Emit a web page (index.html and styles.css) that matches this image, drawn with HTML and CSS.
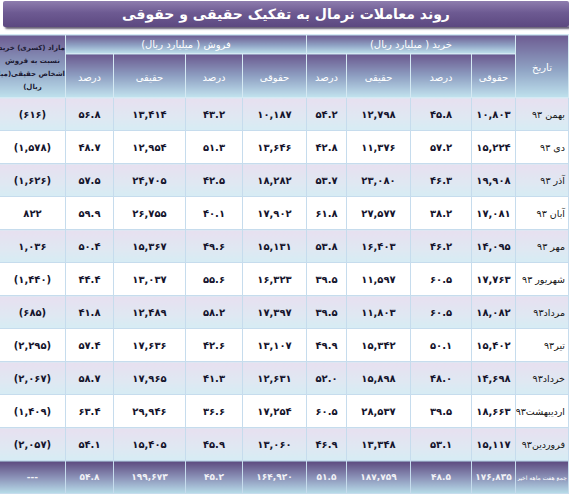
FILE: index.html
```html
<!DOCTYPE html>
<html lang="fa" dir="rtl">
<head>
<meta charset="utf-8">
<title>روند معاملات نرمال</title>
<link rel="stylesheet" href="styles.css">
</head>
<body>
<div class="page">
  <div class="title">روند معاملات نرمال به تفکیک حقیقی و حقوقی</div>
  <table class="grid">
    <colgroup>
      <col class="c-date"><col class="c-b1"><col class="c-b2"><col class="c-b3"><col class="c-b4">
      <col class="c-s1"><col class="c-s2"><col class="c-s3"><col class="c-s4"><col class="c-net">
    </colgroup>
    <thead>
      <tr class="h-group">
        <th rowspan="2" class="h-date">تاریخ</th>
        <th colspan="4">خرید ( میلیارد ریال)</th>
        <th colspan="4">فروش ( میلیارد ریال)</th>
        <th rowspan="2" class="h-net"><div class="clip">مازاد (کسری) خرید<br>نسبت به فروش<br>اشخاص حقیقی(میلیارد<br>ریال)</div></th>
      </tr>
      <tr class="h-sub">
        <th>حقوقی</th><th>درصد</th><th>حقیقی</th><th>درصد</th>
        <th>حقوقی</th><th>درصد</th><th>حقیقی</th><th>درصد</th>
      </tr>
    </thead>
    <tbody>
      <tr class="alt"><td class="date">بهمن ۹۳</td><td>۱۰,۸۰۳</td><td>۴۵.۸</td><td>۱۲,۷۹۸</td><td>۵۴.۲</td><td>۱۰,۱۸۷</td><td>۴۳.۲</td><td>۱۳,۴۱۴</td><td>۵۶.۸</td><td>(۶۱۶)</td></tr>
      <tr><td class="date">دی ۹۳</td><td>۱۵,۲۲۴</td><td>۵۷.۲</td><td>۱۱,۳۷۶</td><td>۴۲.۸</td><td>۱۳,۶۴۶</td><td>۵۱.۳</td><td>۱۲,۹۵۴</td><td>۴۸.۷</td><td>(۱,۵۷۸)</td></tr>
      <tr class="alt"><td class="date">آذر ۹۳</td><td>۱۹,۹۰۸</td><td>۴۶.۳</td><td>۲۳,۰۸۰</td><td>۵۳.۷</td><td>۱۸,۲۸۲</td><td>۴۲.۵</td><td>۲۴,۷۰۵</td><td>۵۷.۵</td><td>(۱,۶۲۶)</td></tr>
      <tr><td class="date">آبان ۹۳</td><td>۱۷,۰۸۱</td><td>۳۸.۲</td><td>۲۷,۵۷۷</td><td>۶۱.۸</td><td>۱۷,۹۰۲</td><td>۴۰.۱</td><td>۲۶,۷۵۵</td><td>۵۹.۹</td><td>۸۲۲</td></tr>
      <tr class="alt"><td class="date">مهر ۹۳</td><td>۱۴,۰۹۵</td><td>۴۶.۲</td><td>۱۶,۴۰۳</td><td>۵۳.۸</td><td>۱۵,۱۳۱</td><td>۴۹.۶</td><td>۱۵,۳۶۷</td><td>۵۰.۴</td><td>۱,۰۳۶</td></tr>
      <tr><td class="date">شهریور ۹۳</td><td>۱۷,۷۶۳</td><td>۶۰.۵</td><td>۱۱,۵۹۷</td><td>۳۹.۵</td><td>۱۶,۳۲۳</td><td>۵۵.۶</td><td>۱۳,۰۳۷</td><td>۴۴.۴</td><td>(۱,۴۴۰)</td></tr>
      <tr class="alt"><td class="date">مرداد۹۳</td><td>۱۸,۰۸۲</td><td>۶۰.۵</td><td>۱۱,۸۰۳</td><td>۳۹.۵</td><td>۱۷,۳۹۷</td><td>۵۸.۲</td><td>۱۲,۴۸۹</td><td>۴۱.۸</td><td>(۶۸۵)</td></tr>
      <tr><td class="date">تیر۹۳</td><td>۱۵,۴۰۲</td><td>۵۰.۱</td><td>۱۵,۳۴۲</td><td>۴۹.۹</td><td>۱۳,۱۰۷</td><td>۴۲.۶</td><td>۱۷,۶۳۶</td><td>۵۷.۴</td><td>(۲,۲۹۵)</td></tr>
      <tr class="alt"><td class="date">خرداد۹۳</td><td>۱۴,۶۹۸</td><td>۴۸.۰</td><td>۱۵,۸۹۸</td><td>۵۲.۰</td><td>۱۲,۶۳۱</td><td>۴۱.۳</td><td>۱۷,۹۶۵</td><td>۵۸.۷</td><td>(۲,۰۶۷)</td></tr>
      <tr><td class="date">اردیبهشت۹۳</td><td>۱۸,۶۶۳</td><td>۳۹.۵</td><td>۲۸,۵۳۷</td><td>۶۰.۵</td><td>۱۷,۲۵۴</td><td>۳۶.۶</td><td>۲۹,۹۴۶</td><td>۶۳.۴</td><td>(۱,۴۰۹)</td></tr>
      <tr class="alt"><td class="date">فروردین۹۳</td><td>۱۵,۱۱۷</td><td>۵۳.۱</td><td>۱۳,۳۴۸</td><td>۴۶.۹</td><td>۱۳,۰۶۰</td><td>۴۵.۹</td><td>۱۵,۴۰۵</td><td>۵۴.۱</td><td>(۲,۰۵۷)</td></tr>
    </tbody>
    <tfoot>
      <tr class="total"><td class="date small"><div class="label">جمع هفت ماهه اخیر</div></td><td>۱۷۶,۸۳۵</td><td>۴۸.۵</td><td>۱۸۷,۷۵۹</td><td>۵۱.۵</td><td>۱۶۴,۹۲۰</td><td>۴۵.۲</td><td>۱۹۹,۶۷۳</td><td>۵۴.۸</td><td>---</td></tr>
    </tfoot>
  </table>
</div>
</body>
</html>
```

FILE: styles.css
```css
html, body {
  margin: 0;
  padding: 0;
  background: #ffffff;
}
body {
  font-family: "DejaVu Sans", "Noto Sans", sans-serif;
  width: 569px;
  height: 494px;
  overflow: hidden;
}
.page {
  display: flex;
  flex-direction: column;
  gap: 7px;
  padding-top: 1px;
}
.title {
  height: 26px;
  width: 566px;
  margin-left: 3px;
  box-sizing: border-box;
  border-radius: 2px;
  background: linear-gradient(#8e7dae 0%, #6d5a92 45%, #5c4880 100%);
  box-shadow: 2px 2px 2px rgba(40, 30, 60, 0.7);
  color: #ffffff;
  font-weight: bold;
  font-size: 14px;
  line-height: 26px;
  text-align: center;
}
.grid {
  border-collapse: collapse;
  table-layout: fixed;
  width: 569px;
}
.c-date { width: 53px; }
.c-b1 { width: 44px; }
.c-b2 { width: 61px; }
.c-b3 { width: 64px; }
.c-b4 { width: 40px; }
.c-s1 { width: 64px; }
.c-s2 { width: 57px; }
.c-s3 { width: 72px; }
.c-s4 { width: 48px; }
.c-net { width: 66px; }

th, td {
  padding: 0;
  overflow: hidden;
  white-space: nowrap;
  text-align: center;
}
th {
  border: 1px solid #d4e9f3;
  color: #ffffff;
  font-weight: normal;
  font-size: 10px;
}
.h-group th {
  height: 18px;
  background: linear-gradient(#6d5c92 0%, #8fa3c4 55%, #bfe1ed 100%);
}
.h-sub th {
  height: 44px;
  padding-top: 4px;
  box-sizing: border-box;
  background: linear-gradient(#6a598f 0%, #8e9fc2 50%, #c2e3ee 100%);
}
.h-date {
  background: linear-gradient(#6a598f 0%, #8e9fc2 55%, #c2e3ee 100%);
  text-align: center;
  padding-top: 3px;
}
.h-net {
  background: linear-gradient(#7b6c9c 0%, #a3b4cf 50%, #c6e4ee 100%);
  color: #1c1a33;
  font-weight: bold;
  font-size: 7px;
  line-height: 13px;
}
.clip {
  width: 65px;
  overflow: hidden;
  padding-top: 3px;
}
td {
  border: 1px solid #c6dced;
  height: 32px;
  font-weight: bold;
  font-size: 10px;
  color: #15142c;
}
tbody tr.alt td {
  background: linear-gradient(#e7e0f0 0%, #dfe8f2 60%, #d6ecf4 100%);
}
td.date {
  text-align: right;
  padding-right: 3px;
  font-weight: normal;
  font-size: 9.5px;
  color: #141414;
}
.total td {
  background: linear-gradient(#5d4a80 0%, #8b92b8 50%, #b8dde9 100%);
  color: #f1f1f6;
  font-weight: bold;
  font-size: 9px;
  border-color: #c6dced;
}
.total td.date.small {
  font-size: 6px;
  font-weight: normal;
  color: #ffffff;
  padding-right: 1px;
}
.label {
  width: 51px;
  overflow: hidden;
}
```
